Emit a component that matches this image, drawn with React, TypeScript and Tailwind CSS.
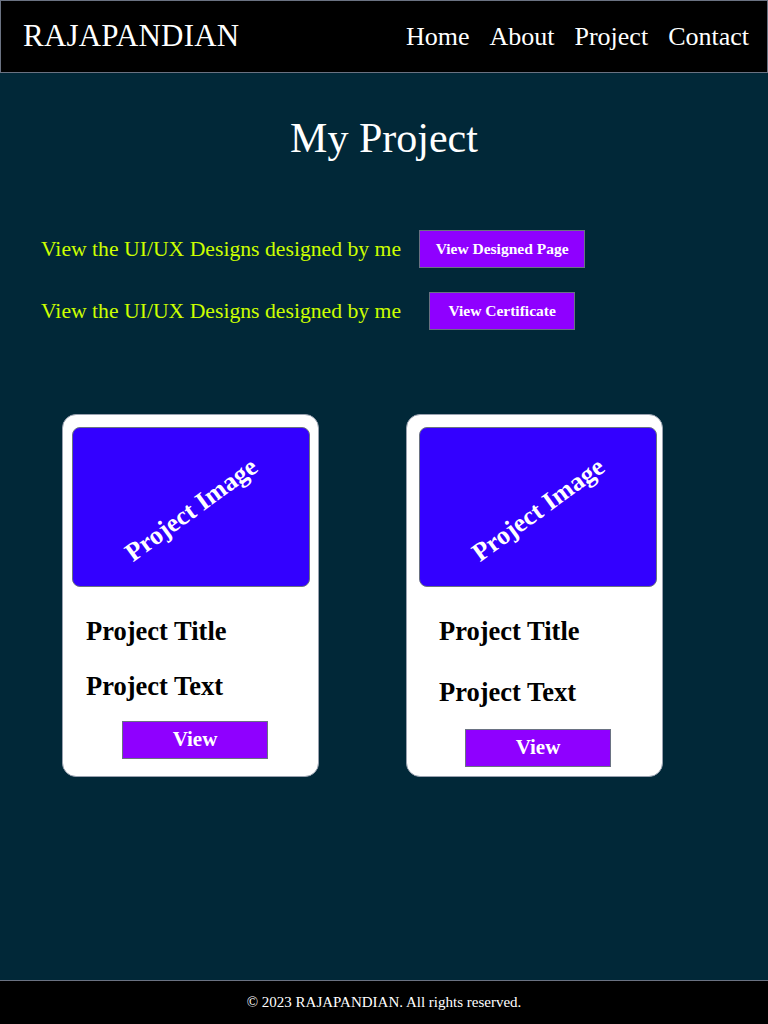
import React from "react";

const serif = { fontFamily: '"Liberation Serif", "DejaVu Serif", serif' };

function ProjectCard({ pad, gap, btnGap }: { pad: string; gap: string; btnGap: string }) {
  return (
    <div className={`w-[257px] h-[363px] bg-white rounded-[14px] border border-gray-400 flex flex-col ${pad}`}>
      <div className="h-[160px] bg-[#3300ff] rounded-[8px] border border-gray-500 flex items-center justify-center overflow-hidden">
        <span className="text-white font-bold text-[26px] -rotate-[36deg] translate-y-[2px] whitespace-nowrap">
          Project Image
        </span>
      </div>
      <div className={`flex flex-col ${gap} px-[14px] mt-[29px]`}>
        <h3 className="text-[26.5px] font-bold text-black leading-[30px]">Project Title</h3>
        <p className="text-[26.5px] font-bold text-black leading-[30px]">Project Text</p>
      </div>
      <div className={`flex justify-center ${btnGap}`}>
        <button className="w-[146px] h-[38px] bg-[#8f00ff] border border-gray-500 text-white font-bold text-[21px]">
          View
        </button>
      </div>
    </div>
  );
}

export default function App() {
  return (
    <div className="min-h-screen flex flex-col bg-[#012838]" style={serif}>
      {/* Header */}
      <header className="h-[73px] bg-black border border-gray-500 flex items-center justify-between pl-[22px] pr-[18px]">
        <h1 className="text-white text-[31px] tracking-[0.2px]">RAJAPANDIAN</h1>
        <nav className="flex gap-[20px] text-white text-[26px]">
          <a href="#">Home</a>
          <a href="#">About</a>
          <a href="#">Project</a>
          <a href="#">Contact</a>
        </nav>
      </header>

      <main className="flex-1 flex flex-col">
        <h2 className="text-white text-[42px] text-center mt-[40px] leading-[50px]">My Project</h2>

        {/* Links */}
        <div className="flex flex-col gap-[24px] pl-[41px] mt-[67px]">
          <div className="flex items-center gap-[18px]">
            <span className="text-[#ccff00] text-[21.7px]">View the UI/UX Designs designed by me</span>
            <button className="w-[166px] h-[38px] bg-[#8f00ff] border border-gray-500 text-white font-bold text-[15.5px]">
              View Designed Page
            </button>
          </div>
          <div className="flex items-center gap-[28px]">
            <span className="text-[#ccff00] text-[21.7px]">View the UI/UX Designs designed by me</span>
            <button className="w-[146px] h-[38px] bg-[#8f00ff] border border-gray-500 text-white font-bold text-[15.5px]">
              View Certificate
            </button>
          </div>
        </div>

        {/* Cards */}
        <div className="flex gap-[87px] pl-[62px] mt-[84px]">
          <ProjectCard pad="pt-[12px] pl-[9px] pr-[8px]" gap="gap-[25px]" btnGap="mt-[20px] ml-[8px]" />
          <ProjectCard pad="pt-[12px] pl-[12px] pr-[5px]" gap="gap-[31px] pl-[20px]" btnGap="mt-[22px]" />
        </div>
      </main>

      {/* Footer */}
      <footer className="h-[44px] bg-black border-t border-gray-500 flex items-center justify-center">
        <p className="text-white text-[15px]">© 2023 RAJAPANDIAN. All rights reserved.</p>
      </footer>
    </div>
  );
}
